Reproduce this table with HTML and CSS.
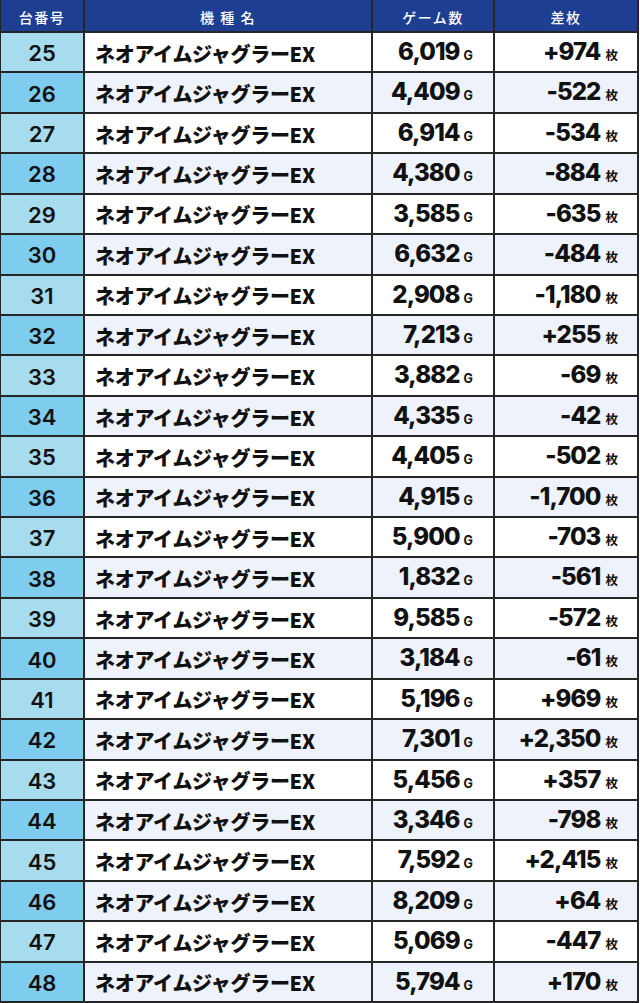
FILE: index.html
```html
<!DOCTYPE html>
<html lang="ja">
<head>
<meta charset="utf-8">
<title>ネオアイムジャグラーEX</title>
<link rel="stylesheet" href="styles.css">
</head>
<body>
<div class="board">
  <div class="row head"><div class="c">台番号</div><div class="c">機 種 名</div><div class="c">ゲーム数</div><div class="c">差枚</div></div>
  <div class="row odd"><div class="no">25</div><div class="nm">ネオアイムジャグラーEX</div><div class="gm">6,019<span class="u">G</span></div><div class="df">+974<span class="m">枚</span></div></div>
  <div class="row even"><div class="no">26</div><div class="nm">ネオアイムジャグラーEX</div><div class="gm">4,409<span class="u">G</span></div><div class="df">-522<span class="m">枚</span></div></div>
  <div class="row odd"><div class="no">27</div><div class="nm">ネオアイムジャグラーEX</div><div class="gm">6,914<span class="u">G</span></div><div class="df">-534<span class="m">枚</span></div></div>
  <div class="row even"><div class="no">28</div><div class="nm">ネオアイムジャグラーEX</div><div class="gm">4,380<span class="u">G</span></div><div class="df">-884<span class="m">枚</span></div></div>
  <div class="row odd"><div class="no">29</div><div class="nm">ネオアイムジャグラーEX</div><div class="gm">3,585<span class="u">G</span></div><div class="df">-635<span class="m">枚</span></div></div>
  <div class="row even"><div class="no">30</div><div class="nm">ネオアイムジャグラーEX</div><div class="gm">6,632<span class="u">G</span></div><div class="df">-484<span class="m">枚</span></div></div>
  <div class="row odd"><div class="no">31</div><div class="nm">ネオアイムジャグラーEX</div><div class="gm">2,908<span class="u">G</span></div><div class="df">-1,180<span class="m">枚</span></div></div>
  <div class="row even"><div class="no">32</div><div class="nm">ネオアイムジャグラーEX</div><div class="gm">7,213<span class="u">G</span></div><div class="df">+255<span class="m">枚</span></div></div>
  <div class="row odd"><div class="no">33</div><div class="nm">ネオアイムジャグラーEX</div><div class="gm">3,882<span class="u">G</span></div><div class="df">-69<span class="m">枚</span></div></div>
  <div class="row even"><div class="no">34</div><div class="nm">ネオアイムジャグラーEX</div><div class="gm">4,335<span class="u">G</span></div><div class="df">-42<span class="m">枚</span></div></div>
  <div class="row odd"><div class="no">35</div><div class="nm">ネオアイムジャグラーEX</div><div class="gm">4,405<span class="u">G</span></div><div class="df">-502<span class="m">枚</span></div></div>
  <div class="row even"><div class="no">36</div><div class="nm">ネオアイムジャグラーEX</div><div class="gm">4,915<span class="u">G</span></div><div class="df">-1,700<span class="m">枚</span></div></div>
  <div class="row odd"><div class="no">37</div><div class="nm">ネオアイムジャグラーEX</div><div class="gm">5,900<span class="u">G</span></div><div class="df">-703<span class="m">枚</span></div></div>
  <div class="row even"><div class="no">38</div><div class="nm">ネオアイムジャグラーEX</div><div class="gm">1,832<span class="u">G</span></div><div class="df">-561<span class="m">枚</span></div></div>
  <div class="row odd"><div class="no">39</div><div class="nm">ネオアイムジャグラーEX</div><div class="gm">9,585<span class="u">G</span></div><div class="df">-572<span class="m">枚</span></div></div>
  <div class="row even"><div class="no">40</div><div class="nm">ネオアイムジャグラーEX</div><div class="gm">3,184<span class="u">G</span></div><div class="df">-61<span class="m">枚</span></div></div>
  <div class="row odd"><div class="no">41</div><div class="nm">ネオアイムジャグラーEX</div><div class="gm">5,196<span class="u">G</span></div><div class="df">+969<span class="m">枚</span></div></div>
  <div class="row even"><div class="no">42</div><div class="nm">ネオアイムジャグラーEX</div><div class="gm">7,301<span class="u">G</span></div><div class="df">+2,350<span class="m">枚</span></div></div>
  <div class="row odd"><div class="no">43</div><div class="nm">ネオアイムジャグラーEX</div><div class="gm">5,456<span class="u">G</span></div><div class="df">+357<span class="m">枚</span></div></div>
  <div class="row even"><div class="no">44</div><div class="nm">ネオアイムジャグラーEX</div><div class="gm">3,346<span class="u">G</span></div><div class="df">-798<span class="m">枚</span></div></div>
  <div class="row odd"><div class="no">45</div><div class="nm">ネオアイムジャグラーEX</div><div class="gm">7,592<span class="u">G</span></div><div class="df">+2,415<span class="m">枚</span></div></div>
  <div class="row even"><div class="no">46</div><div class="nm">ネオアイムジャグラーEX</div><div class="gm">8,209<span class="u">G</span></div><div class="df">+64<span class="m">枚</span></div></div>
  <div class="row odd"><div class="no">47</div><div class="nm">ネオアイムジャグラーEX</div><div class="gm">5,069<span class="u">G</span></div><div class="df">-447<span class="m">枚</span></div></div>
  <div class="row even"><div class="no">48</div><div class="nm">ネオアイムジャグラーEX</div><div class="gm">5,794<span class="u">G</span></div><div class="df">+170<span class="m">枚</span></div></div>
</div>
</body>
</html>
```

FILE: styles.css
```css
html, body {
  margin: 0;
  padding: 0;
  background: #ffffff;
}

.board {
  display: flex;
  flex-direction: column;
  gap: 2px;
  width: 639px;
  height: 1003px;
  padding: 0 2px 2px 1px;
  box-sizing: border-box;
  background: #262626;
  color: #111111;
}

.row {
  display: grid;
  grid-template-columns: 82px 286px 120px 1fr;
  column-gap: 2px;
  flex: 1 1 0;
  min-height: 0;
}

.row > div {
  display: flex;
  align-items: center;
  min-width: 0;
}

.head {
  flex: 0 0 31px;
}

.head .c {
  background: #1d3e91;
  color: #ffffff;
  justify-content: center;
  font-family: "Noto Sans CJK JP", "Noto Sans", sans-serif;
  font-weight: 500;
  font-size: 14px;
  letter-spacing: 1.5px;
  padding-top: 3px;
  box-sizing: border-box;
}

.odd > div { background: #ffffff; }
.even > div { background: #eef2fa; }
.odd > .no { background: #a7dcef; }
.even > .no { background: #7ecdee; }

.no {
  justify-content: center;
  font-family: "Inter", "Liberation Sans", sans-serif;
  font-weight: 600;
  font-size: 22px;
  padding-top: 2px;
  box-sizing: border-box;
}

.nm {
  padding-left: 10px;
  padding-top: 2px;
  box-sizing: border-box;
  font-family: "Noto Sans CJK JP", sans-serif;
  font-weight: 900;
  font-size: 20px;
  letter-spacing: -0.3px;
  white-space: nowrap;
}

.row > .gm, .row > .df {
  justify-content: flex-end;
  align-items: baseline;
  padding-top: 4px;
  box-sizing: border-box;
  font-family: "Inter", "Liberation Sans", sans-serif;
  font-weight: 800;
  font-size: 24px;
  letter-spacing: -0.9px;
  white-space: nowrap;
}

.row > .gm { padding-right: 20px; }
.row > .df { padding-right: 19px; }

.u {
  font-size: 12.5px;
  font-weight: 700;
  letter-spacing: 0;
  margin-left: 4px;
}

.m {
  font-family: "Noto Sans CJK JP", sans-serif;
  font-weight: 700;
  font-size: 12.5px;
  letter-spacing: 0;
  margin-left: 5px;
}
```
